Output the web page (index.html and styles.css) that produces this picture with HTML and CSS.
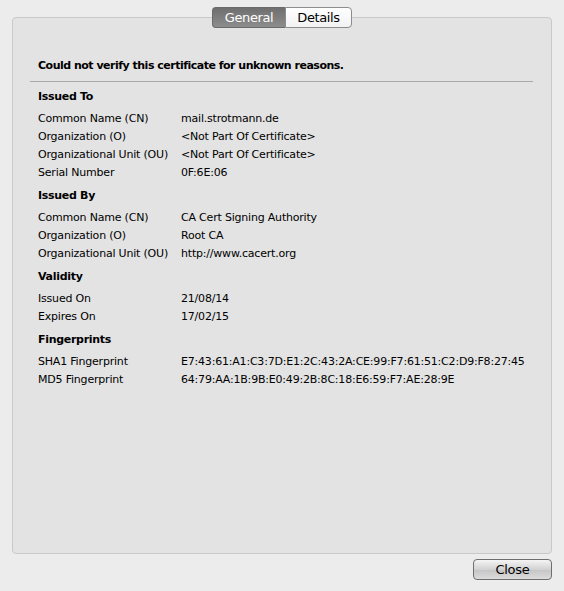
FILE: index.html
```html
<!DOCTYPE html>
<html lang="en">
<head>
    <meta charset="UTF-8">
    <title>Certificate</title>
    <link rel="stylesheet" href="styles.css">
</head>
<body>
    <div class="sheet">
        <div class="tabs">
            <span class="tab general selected">General</span><span class="tab details">Details</span>
        </div>

        <div class="panel">
            <p class="status">Could not verify this certificate for unknown reasons.</p>

            <div class="section">
                <h2>Issued To</h2>
                <div class="row"><span class="label">Common Name (CN)</span><span>mail.strotmann.de</span></div>
                <div class="row"><span class="label">Organization (O)</span><span>&lt;Not Part Of Certificate&gt;</span></div>
                <div class="row"><span class="label">Organizational Unit (OU)</span><span>&lt;Not Part Of Certificate&gt;</span></div>
                <div class="row"><span class="label">Serial Number</span><span>0F:6E:06</span></div>
            </div>

            <div class="section">
                <h2>Issued By</h2>
                <div class="row"><span class="label">Common Name (CN)</span><span>CA Cert Signing Authority</span></div>
                <div class="row"><span class="label">Organization (O)</span><span>Root CA</span></div>
                <div class="row"><span class="label">Organizational Unit (OU)</span><span>http://www.cacert.org</span></div>
            </div>

            <div class="section">
                <h2>Validity</h2>
                <div class="row"><span class="label">Issued On</span><span>21/08/14</span></div>
                <div class="row"><span class="label">Expires On</span><span>17/02/15</span></div>
            </div>

            <div class="section">
                <h2>Fingerprints</h2>
                <div class="row"><span class="label">SHA1 Fingerprint</span><span>E7:43:61:A1:C3:7D:E1:2C:43:2A:CE:99:F7:61:51:C2:D9:F8:27:45</span></div>
                <div class="row"><span class="label">MD5 Fingerprint</span><span>64:79:AA:1B:9B:E0:49:2B:8C:18:E6:59:F7:AE:28:9E</span></div>
            </div>
        </div>

        <div class="buttons">
            <button class="close-button">Close</button>
        </div>
    </div>
</body>
</html>
```

FILE: styles.css
```css
* {
    margin: 0;
    padding: 0;
    box-sizing: border-box;
}

body {
    background-color: #ececec;
    color: #000000;
    font-family: 'DejaVu Sans', sans-serif;
    font-size: 11px;
    letter-spacing: -0.2px;
    width: 564px;
    height: 591px;
    overflow: hidden;
}

.sheet {
    padding: 7px 12px 0 12px;
}

/* segmented tab control sits on the panel's top edge */
.tabs {
    display: flex;
    justify-content: center;
    position: relative;
    z-index: 1;
}

.tab {
    display: inline-block;
    height: 21px;
    line-height: 19px;
    text-align: center;
    font-size: 13px;
    letter-spacing: -0.4px;
    border: 1px solid #8c8c8c;
    background: linear-gradient(#ffffff, #f2f2f2);
    color: #000000;
}

.tab.general {
    width: 73px;
    border-radius: 4px 0 0 4px;
    border-right: none;
}

.tab.details {
    width: 67px;
    border-radius: 0 4px 4px 0;
}

.tab.selected {
    background: linear-gradient(#6f6f6f, #8c8c8c);
    color: #ffffff;
    border-color: #6a6a6a;
}

.panel {
    margin-top: -11px;
    height: 537px;
    background-color: #e3e3e3;
    border: 1px solid #c9c9c9;
    border-radius: 4px;
    padding: 41px 18px 0 25px;
}

.status {
    font-weight: bold;
    letter-spacing: -0.5px;
    padding-bottom: 9px;
    margin-bottom: 1px;
    border-bottom: 1px solid #a9a9a9;
    margin-left: -8px;
    padding-left: 8px;
}

.section {
    margin-top: 8px;
}

.section + .section {
    margin-top: 7px;
}

.section h2 {
    font-size: 11px;
    font-weight: bold;
    letter-spacing: -0.3px;
    line-height: 14px;
    margin-bottom: 6px;
}

.row {
    display: flex;
    height: 18px;
    line-height: 18px;
}

.label {
    width: 143px;
    flex-shrink: 0;
}

.buttons {
    display: flex;
    justify-content: flex-end;
    padding-top: 5px;
}

.close-button {
    width: 79px;
    height: 21px;
    font-family: 'DejaVu Sans', sans-serif;
    font-size: 13px;
    letter-spacing: -0.3px;
    color: #000000;
    border: 1px solid #6e6e6e;
    border-radius: 4px;
    background: linear-gradient(#f4f4f4, #d2d2d2 50%, #c4c4c4 51%, #dcdcdc);
}
```
